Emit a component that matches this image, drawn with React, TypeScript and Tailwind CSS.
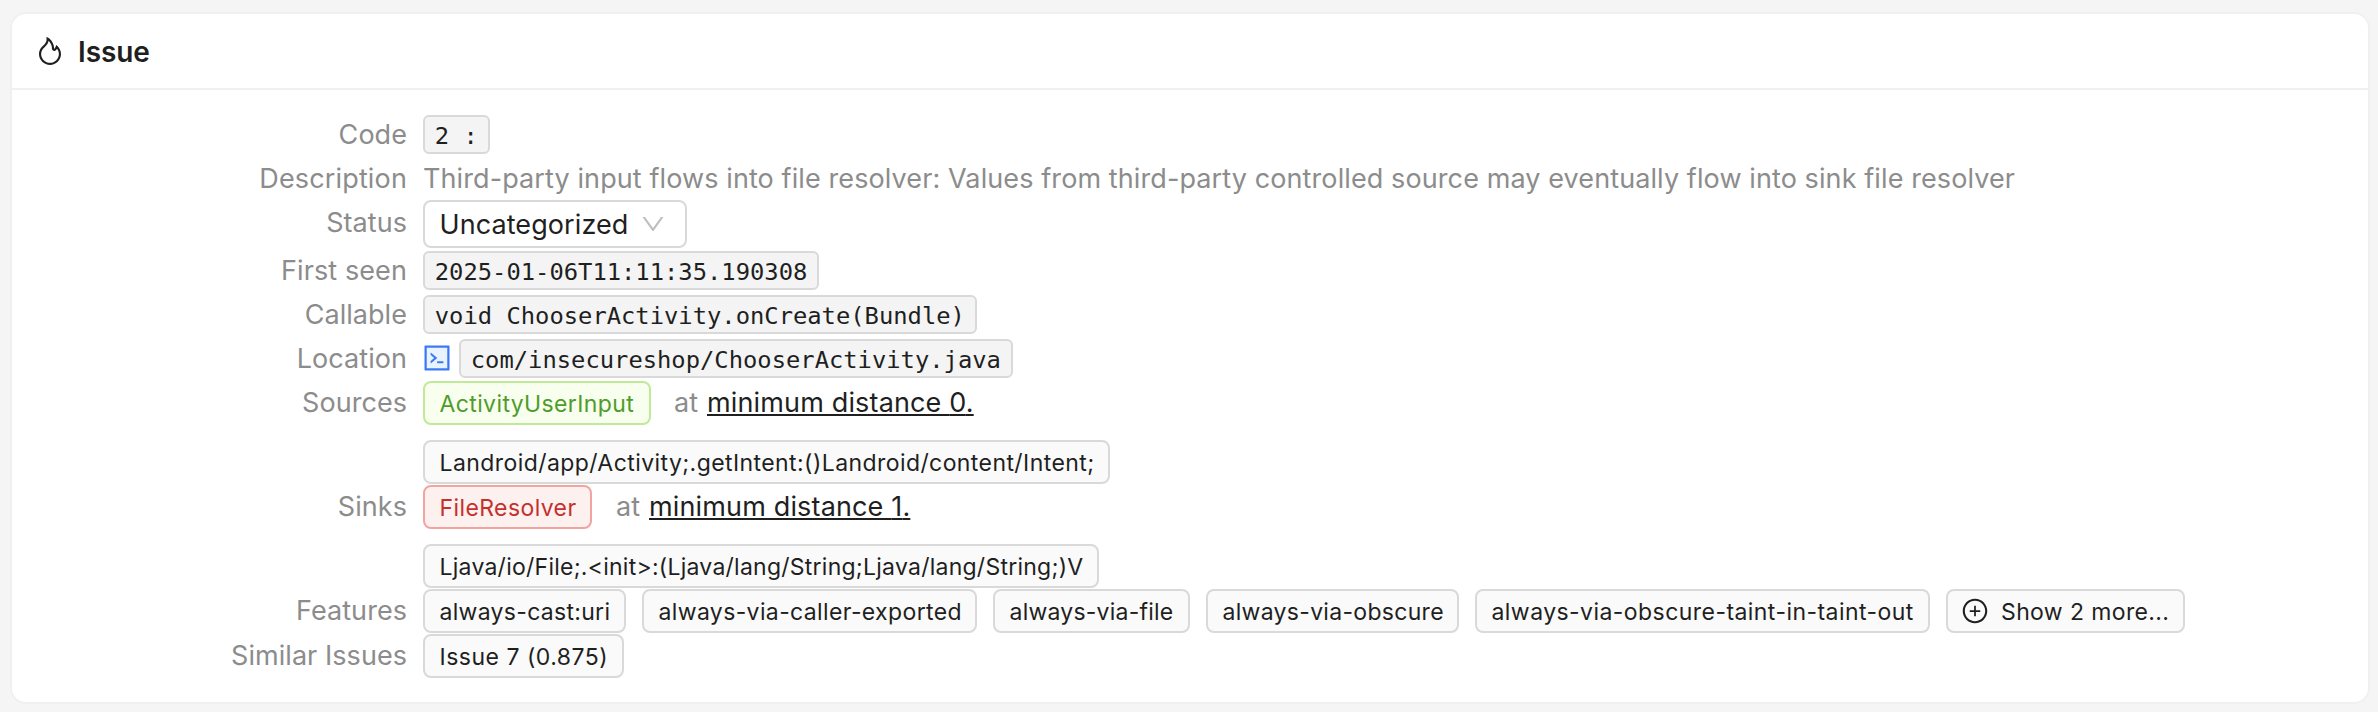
import type { ReactNode } from "react";
import { AiOutlineDown, AiOutlineFire, AiOutlinePlusCircle } from "react-icons/ai";

function Row({
  label,
  height,
  tracking = "tracking-[0.05px]",
  children,
}: {
  label: string;
  height: string;
  tracking?: string;
  children: ReactNode;
}) {
  return (
    <div className={`flex items-start gap-4 ${height}`}>
      <div className={`w-[395px] shrink-0 text-right leading-[41px] text-[#8c8c8c] ${tracking}`}>{label}</div>
      <div className="flex min-w-0 flex-1 flex-col items-start">{children}</div>
    </div>
  );
}

function Code({ children }: { children: ReactNode }) {
  return (
    <code className="mt-px block h-[39px] whitespace-pre rounded-md border-2 border-[#d9d9d9] bg-[#f4f4f4] px-[9.8px] pt-0.5 font-['DejaVu_Sans_Mono',monospace] text-[23.8px] leading-[35px] text-[#1f1f1f]">
      {children}
    </code>
  );
}

function Tag({
  children,
  className = "border-[#d9d9d9] bg-[#fafafa] text-[#1f1f1f]",
  size,
}: {
  children: ReactNode;
  className?: string;
  size: string;
}) {
  return (
    <span
      className={`flex h-11 shrink-0 items-center whitespace-nowrap rounded-lg border-2 pl-[14.5px] pt-0.5 text-[23px] leading-[38px] ${className} ${size}`}
    >
      {children}
    </span>
  );
}

function Distance({ value }: { value: number }) {
  return (
    <span className="flex pt-px leading-[41px] text-[#8c8c8c]">
      <span className="w-[33px]">at</span>
      <span className="tracking-[0.15px] text-[#1f1f1f] underline decoration-2 underline-offset-[2px] [text-decoration-skip-ink:none]">
        minimum distance {value}.
      </span>
    </span>
  );
}

function CodeIcon() {
  return (
    <svg viewBox="0 0 1024 1024" className="size-8">
      <path fill="#e8f3fe" d="M184 184h656v656H184z" />
      <path
        fill="#3b78f6"
        d="M880 112H144c-17.7 0-32 14.3-32 32v736c0 17.7 14.3 32 32 32h736c17.7 0 32-14.3 32-32V144c0-17.7-14.3-32-32-32zm-40 728H184V184h656v656zM516 673c0 4.4 3.4 8 7.5 8h185c4.1 0 7.5-3.6 7.5-8v-48c0-4.4-3.4-8-7.5-8h-185c-4.1 0-7.5 3.6-7.5 8v48zm-194.9 6.1l192-161c3.8-3.2 3.8-9.1 0-12.3l-192-160.9A7.95 7.95 0 0 0 308 351v62.7c0 2.4 1 4.6 2.9 6.1L420.7 512l-109.8 92.2a8.1 8.1 0 0 0-2.9 6.1V673c0 6.8 7.9 10.5 13.1 6.1z"
      />
    </svg>
  );
}

export default function App() {
  return (
    <div className="h-[712px] bg-[#f5f5f5] pl-[10px] pr-2 pt-3 font-['Inter',sans-serif] text-[27px]">
      <section className="h-[692px] rounded-2xl border-2 border-[#f0f0f0] bg-white">
        <header className="flex h-[76px] items-center gap-3 border-b-2 border-[#f0f0f0] pl-[22px] text-[#1f1f1f]">
          <AiOutlineFire className="size-8" />
          <h1 className="pt-px text-[28px] font-semibold leading-[44px] tracking-[-0.1px]">Issue</h1>
        </header>
        <div className="pt-6">
          <Row label="Code" height="h-11">
            <Code>2 :</Code>
          </Row>
          <Row label="Description" height="h-11" tracking="tracking-[0.15px]">
            <p className="whitespace-nowrap leading-[41px] tracking-[0.1px] text-[#8c8c8c]">
              Third-party input flows into file resolver: Values from third-party controlled source may eventually flow
              into sink file resolver
            </p>
          </Row>
          <Row label="Status" height="h-12">
            <button className="-mt-0.5 flex h-12 w-[264px] items-center rounded-lg border-2 border-[#d9d9d9] bg-white pl-[14.5px] text-left leading-[44px] tracking-[0.08px] text-[#1f1f1f]">
              <span className="w-[199.5px] pt-px">Uncategorized</span>
              <AiOutlineDown className="size-7 text-[#bfbfbf]" />
            </button>
          </Row>
          <Row label="First seen" height="h-11" tracking="tracking-[0.1px]">
            <Code>2025-01-06T11:11:35.190308</Code>
          </Row>
          <Row label="Callable" height="h-11">
            <Code>void ChooserActivity.onCreate(Bundle)</Code>
          </Row>
          <Row label="Location" height="h-11">
            <div className="-ml-0.5 flex items-start gap-[6px]">
              <span className="pt-1">
                <CodeIcon />
              </span>
              <Code>com/insecureshop/ChooserActivity.java</Code>
            </div>
          </Row>
          <Row label="Sources" height="h-[104px]">
            <div className="-mt-px flex gap-[23px]">
              <Tag size="w-[228px] tracking-[0.38px]" className="border-[#bfea96] bg-[#f8ffef] text-[#4f9c2a]">
                ActivityUserInput
              </Tag>
              <Distance value={0} />
            </div>
            <div className="pt-[15px]">
              <Tag size="w-[687px] tracking-[0.42px]">
                Landroid/app/Activity;.getIntent:()Landroid/content/Intent;
              </Tag>
            </div>
          </Row>
          <Row label="Sinks" height="h-[104px]">
            <div className="-mt-px flex gap-6">
              <Tag size="w-[169px] tracking-[0.4px]" className="border-[#f2a5a0] bg-[#fdf1f0] text-[#c5302c]">
                FileResolver
              </Tag>
              <Distance value={1} />
            </div>
            <div className="pt-[15px]">
              <Tag size="w-[676px] tracking-[0.248px]">
                {"Ljava/io/File;.<init>:(Ljava/lang/String;Ljava/lang/String;)V"}
              </Tag>
            </div>
          </Row>
          <Row label="Features" height="h-[45px]">
            <div className="-mt-px flex gap-4">
              <Tag size="w-[203px] tracking-[0.3px]">always-cast:uri</Tag>
              <Tag size="w-[335px] tracking-[0.37px]">always-via-caller-exported</Tag>
              <Tag size="w-[197px] tracking-[0.22px]">always-via-file</Tag>
              <Tag size="w-[253px] tracking-[0.3px]">always-via-obscure</Tag>
              <Tag size="w-[455px] tracking-[0.44px]">always-via-obscure-taint-in-taint-out</Tag>
              <Tag size="w-[239px] gap-[12.5px] tracking-[0.38px]">
                <AiOutlinePlusCircle className="-ml-0.5 -mt-0.5 size-7" />
                Show 2 more...
              </Tag>
            </div>
          </Row>
          <Row label="Similar Issues" height="h-11">
            <div className="-mt-px">
              <Tag size="w-[201px] tracking-[0.5px]">Issue 7 (0.875)</Tag>
            </div>
          </Row>
        </div>
      </section>
    </div>
  );
}
